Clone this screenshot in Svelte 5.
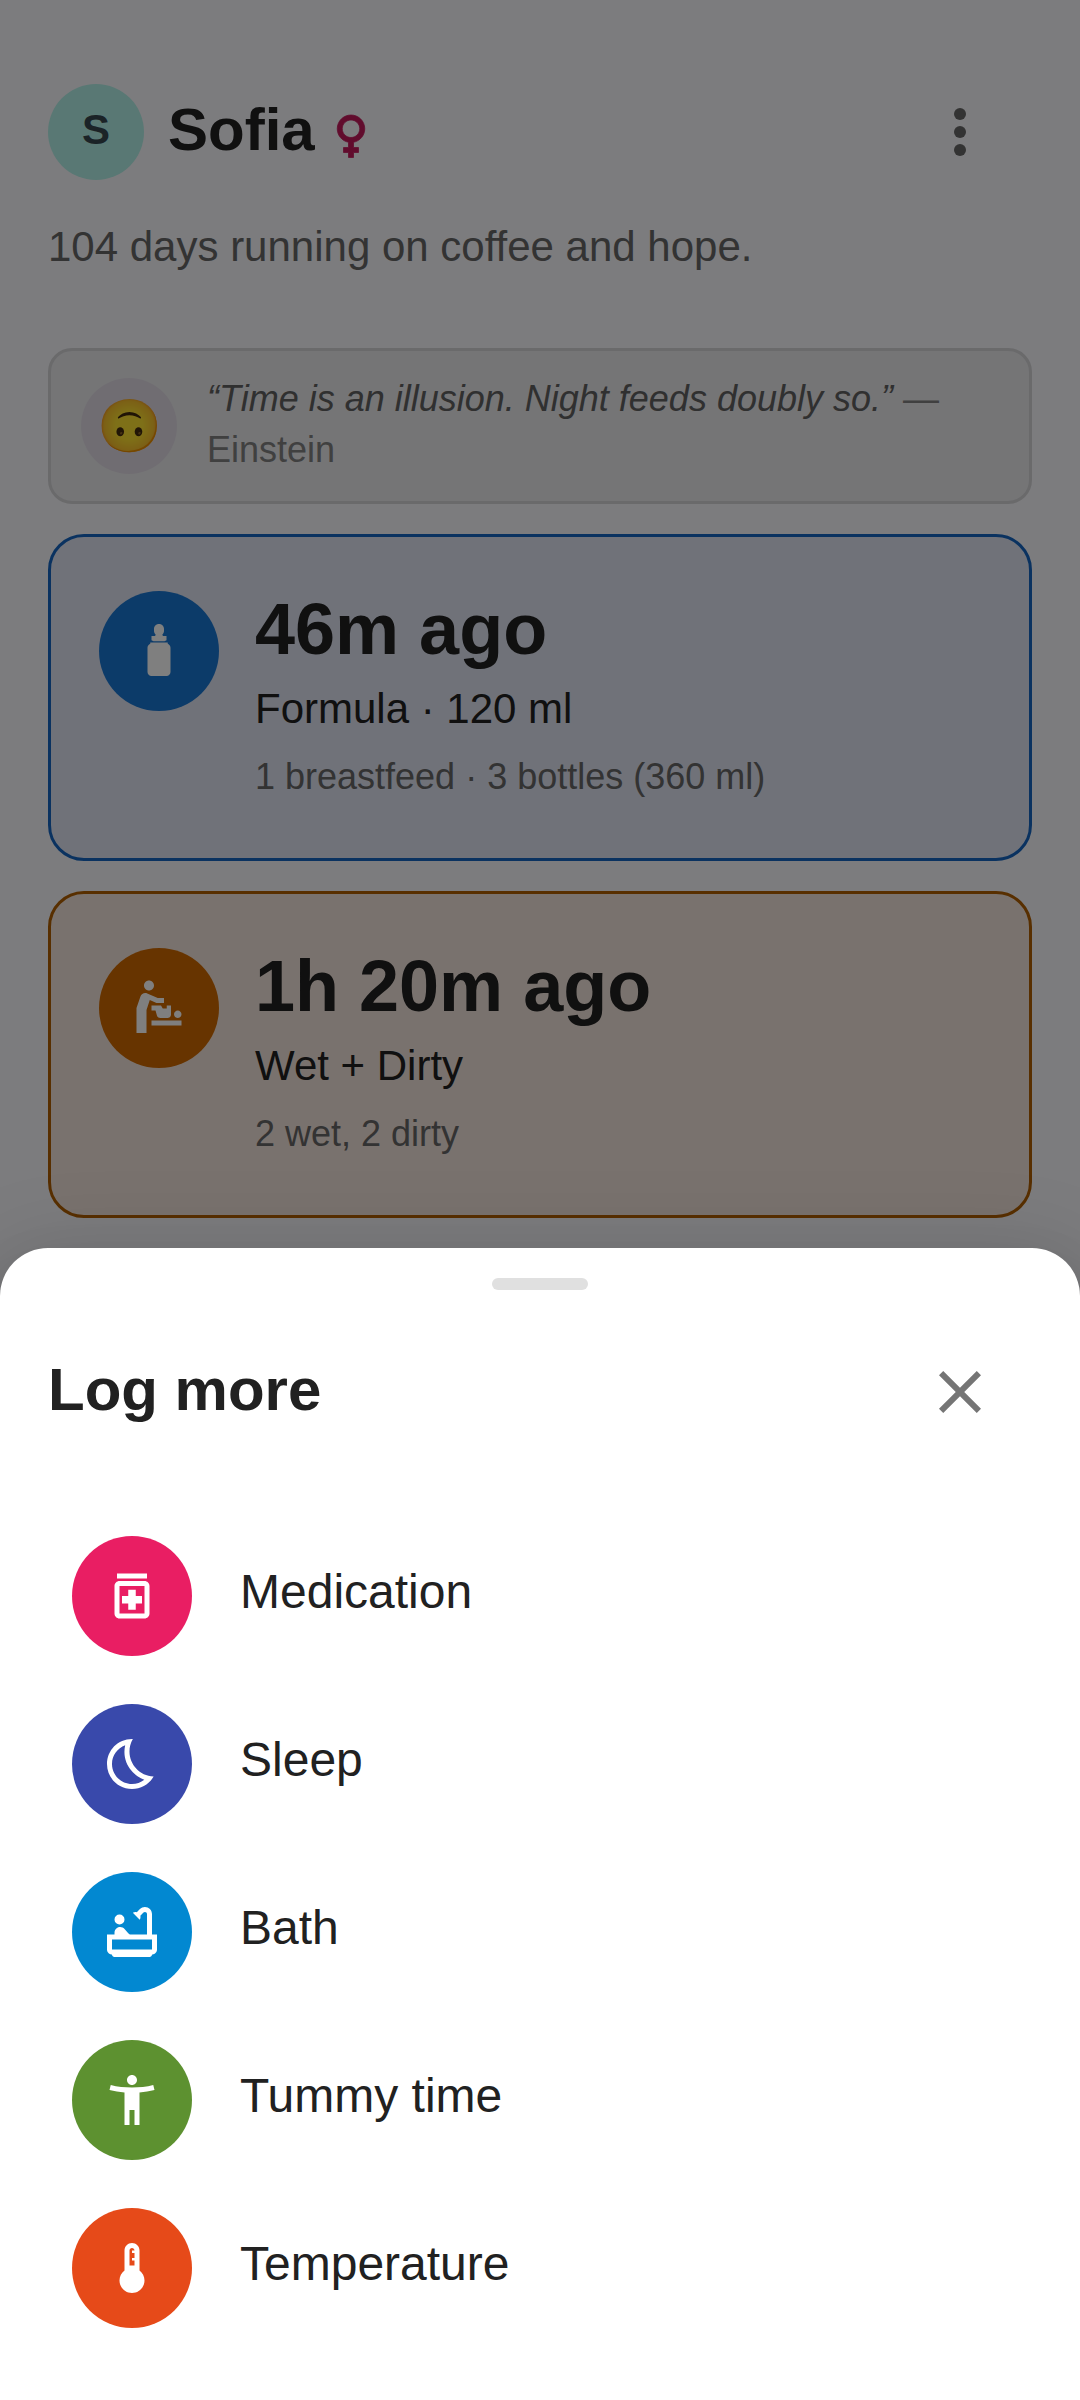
<script>
    let menuOpen = $state(false);
    let sheetOpen = $state(true);

    const cards = [
        {
            kind: "feed",
            ago: "46m ago",
            detail: "Formula · 120 ml",
            summary: "1 breastfeed · 3 bottles (360 ml)",
            icon: "M12 1.200c-1.200 0-2 .9-2 2v.8c0 .6.3 1.100.7 1.500L10.400 6H9v1.700l.8.4h4.400l.8-.4V6h-1.400l-.3-.5c.4-.4.7-.9.7-1.500v-.8c0-1.100-.8-2-2-2zM8.500 8.600v.5c-.7.3-1.100.9-1.100 1.600v9.700c0 .9.7 1.600 1.600 1.600h6c.9 0 1.600-.7 1.600-1.600v-9.700c0-.7-.4-1.300-1.100-1.600v-.5z",
        },
        {
            kind: "diaper",
            ago: "1h 20m ago",
            detail: "Wet + Dirty",
            summary: "2 wet, 2 dirty",
            icon: "M14 8v2h-3L8.310 8.820 7 12.750V22H3V12l1.580-4.630C4.960 6.250 6.220 5.700 7.300 6.180L11.500 8zM8 1c1.100 0 2 .9 2 2s-.9 2-2 2-2-.9-2-2 .9-2 2-2zM9 19h12v-2H9zM19.500 16c.8 0 1.500-.7 1.500-1.500s-.7-1.500-1.500-1.500-1.500.7-1.500 1.500.7 1.500 1.500 1.500zM9 11h3.800l.7 1.200h1.600V11h1.700v3.600c0 .8-.6 1.400-1.400 1.400h-2.900c-.6 0-1.100-.3-1.300-.9L10.600 13H9z",
        },
    ];

    const actions = [
        {
            name: "Medication",
            color: "#e91e63",
            icon: "M6 3h12v2H6zM17 6H7c-1.100 0-2 .9-2 2v11c0 1.100.9 2 2 2h10c1.100 0 2-.9 2-2V8c0-1.100-.9-2-2-2zm0 13H7V8h10v11zM10.500 17.500h3V15H16v-3h-2.500V9.500h-3V12H8v3h2.500z",
        },
        {
            name: "Sleep",
            color: "#3949ab",
            icon: "M9.270 4.490c-1.630 7.540 3.750 12.410 7.660 13.800C15.540 19.380 13.810 20 12 20c-4.410 0-8-3.590-8-8 0-3.450 2.200-6.400 5.270-7.510m2.720-2.480C6.360 2.010 2 6.540 2 12c0 5.520 4.480 10 10 10 3.710 0 6.930-2.020 8.660-5.020-7.510-.25-12.090-8.430-8.320-14.970z",
        },
        {
            name: "Bath",
            color: "#0288d1",
            icon: "M7 5a2 2 0 1 1 0 4 2 2 0 0 1 0-4zM20 13V4.830C20 3.270 18.730 2 17.170 2c-.75 0-1.470.3-2 .83l-1.250 1.250c-.16-.05-.33-.08-.51-.08-.4 0-.77.12-1.080.32l2.760 2.760c.2-.31.32-.68.32-1.080 0-.18-.03-.34-.07-.51l1.250-1.250c.15-.15.36-.24.58-.24.46 0 .83.37.83.83V13h-6.850c-.3-.21-.57-.45-.82-.72l-1.400-1.550c-.19-.21-.43-.38-.69-.5-.31-.15-.65-.23-1-.23C6 10.010 5 11.010 5 12.250V13H2v6c0 1.100.9 2 2 2 0 .55.45 1 1 1h14c.55 0 1-.45 1-1 1.100 0 2-.9 2-2v-6h-2zm0 6H4v-4h16v4z",
        },
        {
            name: "Tummy time",
            color: "#5d9130",
            icon: "M20.500 6c-2.610.7-5.670 1-8.500 1s-5.890-.3-8.500-1L3 8c1.860.5 4 .83 6 1v13h2v-6h2v6h2V9c2-.17 4.140-.5 6-1l-.5-2zM12 6c1.100 0 2-.9 2-2s-.9-2-2-2-2 .9-2 2 .9 2 2 2z",
        },
        {
            name: "Temperature",
            color: "#e64a19",
            icon: "M15 13V5c0-1.660-1.340-3-3-3S9 3.340 9 5v8c-1.210.91-2 2.370-2 4 0 2.760 2.240 5 5 5s5-2.240 5-5c0-1.630-.79-3.090-2-4zm-4-8c0-.55.45-1 1-1s1 .45 1 1h-1v1h1v2h-1v1h1v2h-2V5z",
        },
    ];
</script>

<div class="screen">
    <main class="home">
        <header class="header">
            <span class="avatar">S</span>
            <h1 class="name">Sofia</h1>
            <svg class="gender" viewBox="0 0 24 24" role="img" aria-label="Girl">
                <path d="M17.500 9.500C17.500 6.460 15.040 4 12 4S6.500 6.460 6.500 9.500c0 2.700 1.940 4.930 4.500 5.400V17H9v2h2v2h2v-2h2v-2h-2v-2.100c2.560-.47 4.500-2.700 4.500-5.400zm-9 0C8.500 7.570 10.070 6 12 6s3.500 1.570 3.500 3.500S13.930 13 12 13s-3.500-1.570-3.500-3.500z" />
            </svg>
            <button
                class="icon-button"
                aria-label="Menu"
                aria-expanded={menuOpen}
                onclick={() => (menuOpen = !menuOpen)}
            >
                <svg viewBox="0 0 24 24">
                    <circle cx="12" cy="6" r="2" />
                    <circle cx="12" cy="12" r="2" />
                    <circle cx="12" cy="18" r="2" />
                </svg>
            </button>
        </header>
        <p class="tagline">104 days running on coffee and hope.</p>

        <div class="cards">
            <section class="quote">
                <span class="emoji">🙃</span>
                <p class="quote-text">
                    <em>“Time is an illusion. Night feeds doubly so.”</em> —
                    <span>Einstein</span>
                </p>
            </section>

            {#each cards as card}
                <section class="card {card.kind}">
                    <span class="badge">
                        <svg viewBox="0 0 24 24"><path d={card.icon} /></svg>
                    </span>
                    <div>
                        <h2 class="ago">{card.ago}</h2>
                        <p class="detail">{card.detail}</p>
                        <p class="summary">{card.summary}</p>
                    </div>
                </section>
            {/each}
        </div>
    </main>

    {#if sheetOpen}
        <div class="backdrop"></div>
        <div class="sheet" role="dialog" aria-labelledby="sheet-title">
            <div class="handle"></div>
            <div class="sheet-header">
                <h2 class="sheet-title" id="sheet-title">Log more</h2>
                <button class="icon-button" aria-label="Close" onclick={() => (sheetOpen = false)}>
                    <svg viewBox="0 0 24 24">
                        <path d="M19 6.410 17.590 5 12 10.590 6.410 5 5 6.410 10.590 12 5 17.590 6.410 19 12 13.410 17.590 19 19 17.590 13.410 12z" />
                    </svg>
                </button>
            </div>
            <ul class="actions">
                {#each actions as action}
                    <li>
                        <button class="action">
                            <span class="badge" style="background: {action.color}">
                                <svg viewBox="0 0 24 24"><path d={action.icon} /></svg>
                            </span>
                            <span class="action-name">{action.name}</span>
                        </button>
                    </li>
                {/each}
            </ul>
        </div>
    {/if}
</div>

<style>
    :global(body) {
        margin: 0;
        background: #f8f8fc;
    }

    .screen {
        position: relative;
        min-height: 100vh;
        overflow: hidden;
        font-family: "Liberation Sans", Arial, sans-serif;
        color: #212121;
    }

    h1,
    h2,
    p,
    ul {
        margin: 0;
        padding: 0;
    }

    button {
        border: none;
        background: none;
        padding: 0;
        font: inherit;
        color: inherit;
        cursor: pointer;
    }

    svg {
        display: block;
        fill: currentColor;
    }

    .home {
        padding: 60px 48px;
    }

    .header {
        display: flex;
        align-items: center;
    }

    .avatar {
        display: flex;
        align-items: center;
        justify-content: center;
        box-sizing: border-box;
        width: 96px;
        height: 96px;
        margin-right: 24px;
        padding-bottom: 4px;
        border-radius: 50%;
        background: #b2f0e8;
        color: #37474f;
        font-size: 42px;
        line-height: 42px;
        font-weight: bold;
    }

    .name,
    .sheet-title {
        padding-bottom: 6px;
        font-size: 60px;
        line-height: 73px;
    }

    .gender {
        width: 60px;
        height: 60px;
        margin: 6px 0 0 6px;
        color: #c2185b;
        stroke: currentColor;
        stroke-width: 0.3;
    }

    .icon-button {
        display: flex;
        align-items: center;
        justify-content: center;
        width: 144px;
        height: 144px;
        margin-left: auto;
        color: #757575;
    }

    .header .icon-button {
        color: #666;
    }

    .icon-button svg {
        width: 72px;
        height: 72px;
    }

    .tagline {
        margin: 12px 0 70px;
        font-size: 42px;
        line-height: 62px;
        color: #666;
    }

    .cards {
        display: flex;
        flex-direction: column;
        gap: 30px;
    }

    .quote {
        display: flex;
        align-items: center;
        gap: 30px;
        padding: 22px 30px;
        border: 3px solid #d4d4d7;
        border-radius: 24px;
        background: #eaeaed;
    }

    .emoji {
        display: flex;
        flex: none;
        align-items: center;
        justify-content: center;
        width: 96px;
        height: 96px;
        border-radius: 50%;
        background: #e1dbe4;
        font-size: 52px;
        line-height: 60px;
    }

    .quote-text {
        padding-bottom: 4px;
        font-size: 36px;
        line-height: 51px;
        color: #808080;
    }

    .quote-text em {
        color: #606060;
    }

    .card {
        display: flex;
        align-items: flex-start;
        gap: 36px;
        padding: 48px 48px 56px;
        border: 3px solid;
        border-radius: 36px;
    }

    .badge {
        display: flex;
        flex: none;
        align-items: center;
        justify-content: center;
        width: 120px;
        height: 120px;
        border-radius: 50%;
        color: #fff;
    }

    .badge svg {
        width: 60px;
        height: 60px;
    }

    .card .badge {
        margin-top: 6px;
    }

    .feed {
        border-color: #1565c0;
        background: #e0e4f2;
    }

    .feed .badge {
        background: #1976d2;
    }

    .diaper {
        border-color: #b05e00;
        background: #f3e5dd;
    }

    .diaper .badge {
        background: #cf6900;
    }

    .ago {
        font-size: 72px;
        line-height: 88px;
        color: #212121;
    }

    .detail {
        margin-top: 6px;
        font-size: 42px;
        line-height: 60px;
    }

    .summary {
        margin-top: 12px;
        font-size: 36px;
        line-height: 51px;
        color: #666;
    }

    .backdrop {
        position: absolute;
        inset: 0;
        background: rgba(0, 0, 0, 0.5);
    }

    .sheet {
        position: absolute;
        left: 0;
        right: 0;
        bottom: 0;
        padding: 30px 0 48px;
        border-radius: 48px 48px 0 0;
        background: #fff;
        box-shadow:
            0 24px 30px -15px rgba(0, 0, 0, 0.2),
            0 48px 72px 6px rgba(0, 0, 0, 0.14),
            0 18px 90px 15px rgba(0, 0, 0, 0.12);
    }

    .handle {
        width: 96px;
        height: 12px;
        margin: 0 auto;
        border-radius: 6px;
        background: #e0e0e0;
    }

    .sheet-header {
        display: flex;
        align-items: center;
        padding: 30px 48px 48px;
    }

    .actions {
        list-style: none;
    }

    .action {
        display: flex;
        align-items: center;
        gap: 48px;
        width: 100%;
        padding: 24px 72px;
        text-align: left;
    }

    .action-name {
        padding-bottom: 8px;
        font-size: 48px;
        line-height: 72px;
    }
</style>
